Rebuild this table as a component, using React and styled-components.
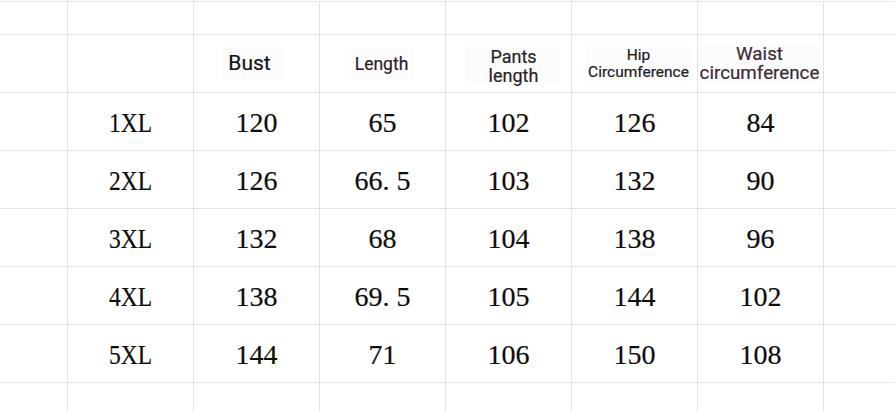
import React from "react"
import styled, { createGlobalStyle } from "styled-components"

const Global = createGlobalStyle`
    html, body {
        margin: 0;
        padding: 0;
        background: #ffffff;
        overflow: hidden;
    }
`

const Sheet = styled.div`
    display: grid;
    grid-template-columns: 68px repeat(6, 126px) 1fr;
    grid-template-rows: 33px repeat(6, 58px) 1fr;
    width: 895px;
    height: 411px;
    margin-top: 1px;
    border-top: 1px solid #e3e3e3;
    box-sizing: border-box;
`

const Cell = styled.div`
    box-sizing: border-box;
    border-right: ${p => (p.$last ? "none" : "1px solid #e3e3e3")};
    border-bottom: ${p => (p.$bottom ? "none" : "1px solid #e3e3e3")};
    display: flex;
    align-items: center;
    justify-content: center;
    overflow: visible;
    white-space: nowrap;
`

const Label = styled.div`
    font-family: Roboto, "Noto Sans", sans-serif;
    font-size: ${p => p.$size}px;
    line-height: ${p => p.$lh}px;
    color: ${p => p.$color};
    background: #fcfcfc;
    padding: ${p => p.$pad};
    text-align: center;
    -webkit-text-stroke: 0.2px ${p => p.$color};
    transform: translate(${p => p.$shift || 0}px, ${p => p.$down || 0}px);
`

const Num = styled.div`
    font-family: "Liberation Serif", "Times New Roman", serif;
    font-size: 28px;
    line-height: 28px;
    color: #0d0d0d;
    padding-top: 3px;
    -webkit-text-stroke: 0.2px #0d0d0d;
    transform: ${p => (p.$size ? "scaleX(0.84)" : "none")};
`

const Dot = styled.span`
    display: inline-block;
    width: 0.5em;
`

const headers = [
    { text: ["Bust"], size: 21, lh: 24, color: "#121212", pad: "4px 14px 5px 6px", shift: -3 },
    { text: ["Length"], size: 17.5, lh: 22, color: "#2b1c29", pad: "5px 6px 5px 4px" },
    { text: ["Pants", "length"], size: 18, lh: 19, color: "#2b1f2a", pad: "0 22px 0 24px", shift: 4, down: 2 },
    { text: ["Hip", "Circumference"], size: 15.5, lh: 17, color: "#202020", pad: "0 2px", shift: 4 },
    { text: ["Waist", "circumference"], size: 18.8, lh: 19, color: "#3b2c38", pad: "0 1px", shift: -1 },
]

const rows = [
    ["1XL", "120", "65", "102", "126", "84"],
    ["2XL", "126", "66.5", "103", "132", "90"],
    ["3XL", "132", "68", "104", "138", "96"],
    ["4XL", "138", "69.5", "105", "144", "102"],
    ["5XL", "144", "71", "106", "150", "108"],
]

const renderNum = v => {
    if (!v.includes(".")) return v
    const [a, b] = v.split(".")
    return (
        <>
            {a}
            <Dot>.</Dot>
            {b}
        </>
    )
}

const blankRow = bottom =>
    Array.from({ length: 8 }, (_, i) => <Cell key={i} $last={i === 7} $bottom={bottom} />)

export default function App() {
    return (
        <>
            <Global />
            <Sheet>
                {blankRow(false)}

                <Cell />
                <Cell />
                {headers.map(h => (
                    <Cell key={h.text.join(" ")}>
                        <Label
                            $size={h.size}
                            $lh={h.lh}
                            $color={h.color}
                            $pad={h.pad}
                            $shift={h.shift}
                            $down={h.down}
                        >
                            {h.text.map(t => (
                                <div key={t}>{t}</div>
                            ))}
                        </Label>
                    </Cell>
                ))}
                <Cell $last />

                {rows.map(r => (
                    <React.Fragment key={r[0]}>
                        <Cell />
                        {r.map((v, i) => (
                            <Cell key={i}>
                                <Num $size={i === 0}>{renderNum(v)}</Num>
                            </Cell>
                        ))}
                        <Cell $last />
                    </React.Fragment>
                ))}

                {blankRow(true)}
            </Sheet>
        </>
    )
}
